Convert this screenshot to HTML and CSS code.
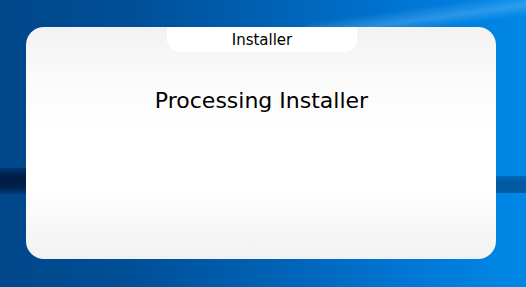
FILE: index.html
```html
<!DOCTYPE html>
<html lang="en">
<head>
    <meta charset="UTF-8">
    <title>Installer</title>
    <link rel="stylesheet" href="styles.css">
</head>
<body>
    <div class="desktop">
        <div class="band band-left"></div>
        <div class="band band-right"></div>
        <div class="streak"></div>
        <div id="installer">
            <div class="tab">Installer</div>
            <p class="status">Processing Installer</p>
        </div>
    </div>
</body>
</html>
```

FILE: styles.css
```css
* {
    margin: 0;
    padding: 0;
}
body {
    width: 526px;
    height: 287px;
    overflow: hidden;
}
.desktop {
    position: relative;
    width: 526px;
    height: 287px;
    padding: 27px 0 0 26px;
    box-sizing: border-box;
    background: linear-gradient(90deg, #00478a 0%, #004f97 25%, #0064b8 55%, #0078d8 80%, #0088e6 100%);
}
.band {
    position: absolute;
    top: 168px;
    height: 26px;
}
.band-left {
    left: 0;
    width: 40px;
    background: linear-gradient(180deg, #00356d 0%, #001d45 35%, #001f48 70%, #003a78 100%);
}
.band-right {
    right: 0;
    width: 40px;
    top: 176px;
    height: 17px;
    background: linear-gradient(180deg, #0067b8 0%, #00589f 40%, #005ca8 100%);
}
.streak {
    position: absolute;
    top: 0;
    right: 0;
    width: 220px;
    height: 27px;
    background: linear-gradient(172deg, transparent 40%, rgba(120, 200, 255, 0.35) 62%, transparent 80%);
}
#installer {
    position: relative;
    width: 470px;
    height: 232px;
    border-radius: 18px;
    background: linear-gradient(180deg, #f2f2f2 0%, #fafafa 20%, #ffffff 45%, #ffffff 70%, #f7f7f7 88%, #f1f1f1 100%);
    font-family: "DejaVu Sans", Tahoma, sans-serif;
    color: #000;
    text-align: center;
}
.tab {
    width: 190px;
    height: 25px;
    margin-left: 141px;
    background: #fff;
    border-radius: 0 0 13px 13px;
    font-size: 15px;
    line-height: 27px;
}
.status {
    padding-top: 35px;
    padding-left: 1px;
    font-size: 22px;
    line-height: 28px;
}
```
